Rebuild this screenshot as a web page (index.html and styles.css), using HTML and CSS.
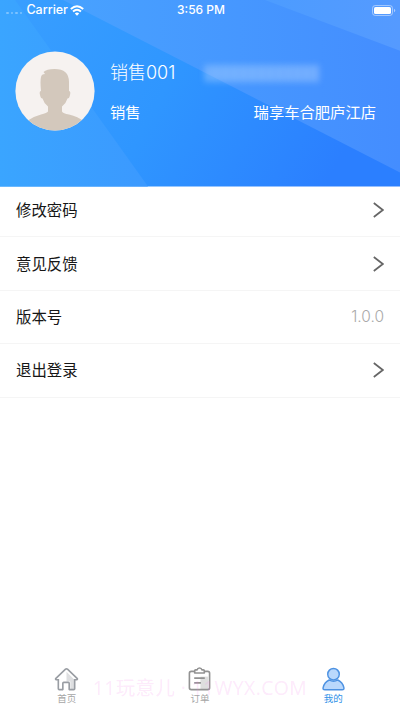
FILE: index.html
```html
<!DOCTYPE html>
<html lang="zh-CN">
<head>
<meta charset="utf-8">
<title>我的</title>
<link rel="stylesheet" href="styles.css">
</head>
<body>
<div class="app">
  <header class="hero">
    <svg class="hero-bg" viewBox="0 0 400 187" preserveAspectRatio="none" aria-hidden="true">
      <defs>
        <linearGradient id="base" x1="0" y1="0" x2="1" y2=".25"><stop offset="0" stop-color="#399fff"/><stop offset=".5" stop-color="#2f96ff"/><stop offset="1" stop-color="#2b7fff"/></linearGradient>
        <linearGradient id="left" x1="0" y1="0" x2="1" y2="0"><stop offset="0" stop-color="#3aa5ff"/><stop offset="1" stop-color="#3b99ff"/></linearGradient>
        <linearGradient id="beam" x1="0" y1="0" x2="1" y2="0"><stop offset="0" stop-color="#48a2ff"/><stop offset="1" stop-color="#448dff"/></linearGradient>
        <linearGradient id="corner" x1="0" y1="0" x2="1" y2="0"><stop offset="0" stop-color="#4c9cff"/><stop offset="1" stop-color="#559aff"/></linearGradient>
      </defs>
      <path fill="url(#base)" d="M0 0h400v187H0z"/>
      <path fill="url(#left)" d="M0 0h15l133 187H0z"/>
      <path fill="url(#beam)" d="M63 0h337v173z"/>
      <path fill="url(#corner)" d="M265 0h135v51z"/>
    </svg>
    <div class="status">
      <div class="carrier">
        <span class="dots"><i></i><i></i><i></i><i></i></span>
        <span>Carrier</span>
        <svg class="wifi" viewBox="0 0 14 11"><path fill="none" stroke="#fff" stroke-width="1.9" d="M.8 4Q7-1.7 13.2 4M3 6.5q4-3.6 8 0"/><path fill="#fff" d="M4.8 8.4q2.2-1.9 4.400 0L7 10.8z"/></svg>
      </div>
      <span class="time">3:56 PM</span>
      <svg class="battery" viewBox="0 0 24 11"><rect x=".5" y=".5" width="20" height="10" rx="2.8" fill="none" stroke="#fff" stroke-opacity=".45"/><rect x="2" y="2" width="17" height="7" rx="1.6" fill="#fff"/><path fill="#fff" fill-opacity=".5" d="M22 3.8q1.2.4 1.2 1.7T22 7.2z"/></svg>
    </div>
    <div class="profile">
      <svg class="avatar" viewBox="0 0 80 80">
        <defs><clipPath id="disc"><circle cx="40" cy="40" r="39.6"/></clipPath></defs>
        <g clip-path="url(#disc)"><path fill="#f6f2f0" d="M0 0h80v80H0z"/><path fill="#d3c8bc" d="M28.5 21q3-3 11-3 15 0 14.5 14v8q2 0 1 4-.7 3.500-2.500 3.500-1.500 5-5.500 8v5q1 2 7 3 9 2 15 7v10H12V70q6-4.500 14-6.500 6-1.300 7-3v-5q-4-3-5.500-8-1.800 0-2.500-3.500-1-4 1-4-1-10 0-14 .5-3 4-3z"/></g>
      </svg>
      <div class="details">
        <div class="line name"><span>销售001</span><span class="masked"></span></div>
        <div class="line role"><span>销售</span><span>瑞享车合肥庐江店</span></div>
      </div>
    </div>
  </header>
  <main class="list">
    <div class="row"><span>修改密码</span><svg class="chevron" viewBox="0 0 11 16"><path d="M.8 1l9 7-9 7"/></svg></div>
    <div class="row"><span>意见反馈</span><svg class="chevron" viewBox="0 0 11 16"><path d="M.8 1l9 7-9 7"/></svg></div>
    <div class="row"><span>版本号</span><span class="version">1.0.0</span></div>
    <div class="row"><span>退出登录</span><svg class="chevron" viewBox="0 0 11 16"><path d="M.8 1l9 7-9 7"/></svg></div>
  </main>
  <nav class="tabs">
    <div class="tab"><svg viewBox="0 0 26 26"><path fill="#dedfe1" d="M13 5l8 8v10h-4v-8h-4z"/><path class="gray" d="M4.500 12.500v10q0 1 1 1h3.700V17q0-1 1-1h4.600q1 0 1 1v6.500h4.700q1 0 1-1v-10M4.500 13.200H2.300q-1.200-.4-.3-1.400L12 2.300q1-.9 2 0l10 9.500q.9 1-.3 1.400h-2.200"/></svg><span>首页</span></div>
    <div class="tab"><svg viewBox="0 0 26 26"><path fill="#dedede" d="M14 10h8v13h-8z"/><path class="gray clip" d="M8 4.500H4.500q-2 0-2 2v15q0 2 2 2h17q2 0 2-2v-15q0-2-2-2H18M8 6.200V4q0-1 1-1h1.500q.5-2 2.500-2t2.500 2H17q1 0 1 1v2.200zM7.500 11.500h11M7.500 16.500h7"/></svg><span>订单</span></div>
    <div class="tab active"><svg viewBox="0 0 26 26"><g fill="#bad8fc" stroke="#4d92e2" stroke-width="1.500"><circle cx="13" cy="7.500" r="6"/><path d="M8.500 13.500q4.500 2.800 9 0 5 2.300 6.300 8 .5 2.200-1.800 2.200H4q-2.300 0-1.800-2.200 1.300-5.700 6.300-8z"/></g></svg><span>我的</span></div>
  </nav>
  <div class="watermark">11玩意儿 · 11WYX.COM</div>
</div>
</body>
</html>
```
FILE: styles.css
```css
* { box-sizing: border-box; }
body { margin: 0; background: #fff; color: #161616; font-family: "Liberation Sans", "Noto Sans CJK SC", sans-serif; }
.app { position: relative; width: 400px; height: 710px; display: flex; flex-direction: column; overflow: hidden; }
.hero { position: relative; z-index: 1; height: 186.5px; flex: none; color: #fff; }
.hero-bg { position: absolute; inset: 0; width: 100%; height: 100%; }
.status { position: relative; height: 20px; padding: 0 4px 0 6px; display: grid; grid-template-columns: 1fr auto 1fr; align-items: center; font: 500 12.5px/20px Inter, sans-serif; }
.time { font-size: 12px; }
.carrier { display: flex; align-items: center; }
.dots { display: flex; gap: 2px; margin: 6px 4px 0 0; }
.dots i { width: 2.6px; height: 2.6px; border-radius: 50%; background: rgba(255, 255, 255, .35); }
.wifi { width: 14px; height: 11px; margin-left: 2px; }
.battery { width: 24px; height: 11px; justify-self: end; }
.profile { position: relative; display: flex; margin: 31px 24px 0 15px; gap: 15px; }
.avatar { width: 80px; height: 80px; flex: none; }
.details { flex: 1; padding-top: 9px; }
.line { display: flex; align-items: center; }
.name { height: 26px; font: 300 18px/26px Inter, "Noto Sans CJK SC", sans-serif; }
.masked { width: 114px; height: 17px; margin-left: 30px; background: repeating-linear-gradient(90deg, rgba(200, 225, 255, .42) 0 5px, rgba(185, 215, 255, .28) 5px 9px); filter: blur(3px); }
.role { height: 24px; margin-top: 12.5px; justify-content: space-between; font: 400 15.3px/24px "Noto Sans CJK SC", sans-serif; }
.list { margin-top: -2.5px; flex: 1; }
.row { height: 53.4px; padding: 0 16px 2px; display: flex; align-items: center; justify-content: space-between; border-bottom: 1px solid #f5f5f5; font: 400 15.4px/24px "Noto Sans CJK SC", sans-serif; }
.chevron { width: 11px; height: 16px; margin-top: 2px; }
.chevron path { fill: none; stroke: #666; stroke-width: 1.7; }
.version { margin-top: 2px; color: #aaa; font: 300 15.5px/24px Inter, sans-serif; }
.tabs { display: flex; height: 44px; flex: none; }
.tab { flex: 1; display: flex; flex-direction: column; align-items: center; color: #a6a6a6; font: 400 9.5px/12px "Noto Sans CJK SC", sans-serif; }
.tab svg { width: 25px; height: 25px; margin-top: 1px; }
.gray { fill: none; stroke: #999da3; stroke-width: 1.7; stroke-linejoin: round; }
.clip { stroke: #929292; }
.active { color: #2e91e8; }
.watermark { position: absolute; left: 0; right: 0; top: 676px; text-align: center; color: rgba(245, 130, 235, .18); font: 400 19.4px/24px "Open Sans", "Noto Sans CJK SC", sans-serif; letter-spacing: .4px; white-space: nowrap; }
```
